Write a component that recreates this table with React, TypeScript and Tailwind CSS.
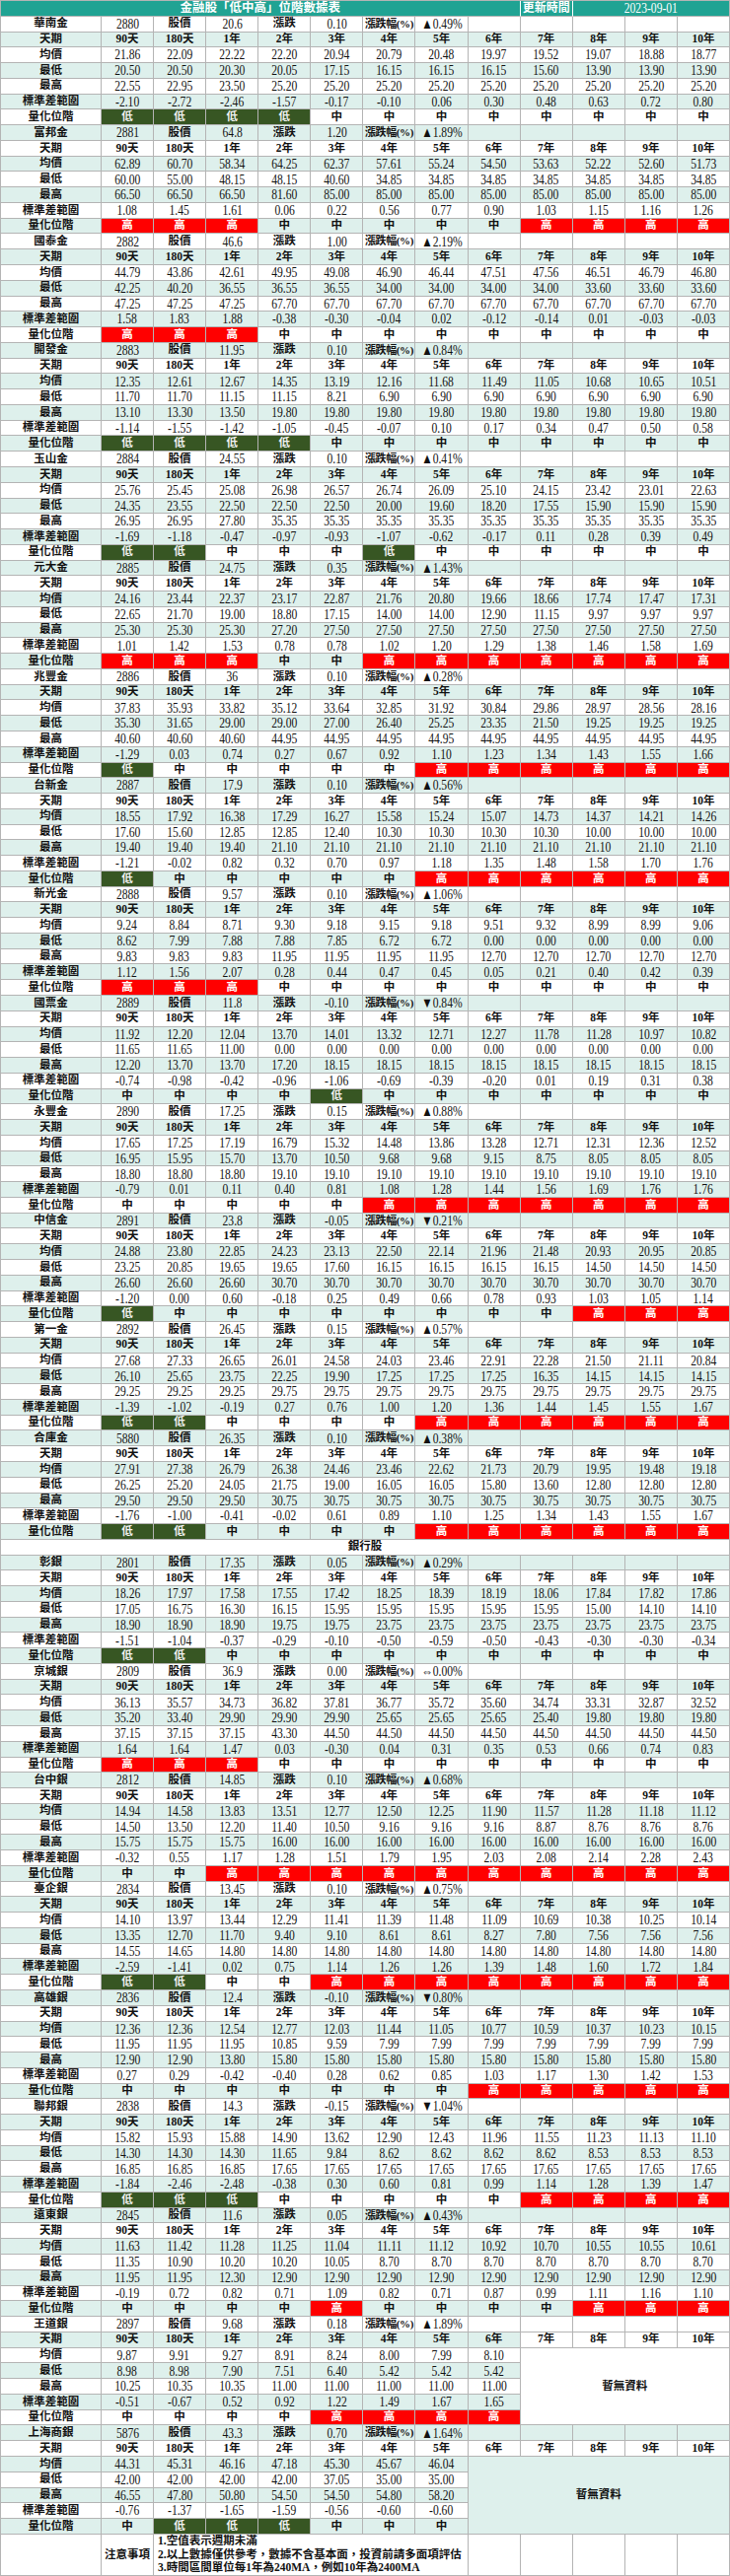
import React from 'react';
import clsx from 'clsx';

type Stock = {
  name: string;
  code: string;
  price: string;
  change: string;
  pct: string;
  avg: string;
  low: string;
  high: string;
  sd: string;
  level: string;
  tailWhite?: boolean;
  noDataBg?: string;
};

const PERIODS = ['90天', '180天', '1年', '2年', '3年', '4年', '5年', '6年', '7年', '8年', '9年', '10年'];

const MINT = 'bg-[#def0ec]';
const WHITE = 'bg-white';

const financials: Stock[] = [
  {
    name: '華南金', code: '2880', price: '20.6', change: '0.10', pct: '▲0.49%',
    avg: '21.86 22.09 22.22 22.20 20.94 20.79 20.48 19.97 19.52 19.07 18.88 18.77',
    low: '20.50 20.50 20.30 20.05 17.15 16.15 16.15 16.15 15.60 13.90 13.90 13.90',
    high: '22.55 22.95 23.50 25.20 25.20 25.20 25.20 25.20 25.20 25.20 25.20 25.20',
    sd: '-2.10 -2.72 -2.46 -1.57 -0.17 -0.10 0.06 0.30 0.48 0.63 0.72 0.80',
    level: '低低低低中中中中中中中中',
  },
  {
    name: '富邦金', code: '2881', price: '64.8', change: '1.20', pct: '▲1.89%',
    avg: '62.89 60.70 58.34 64.25 62.37 57.61 55.24 54.50 53.63 52.22 52.60 51.73',
    low: '60.00 55.00 48.15 48.15 40.60 34.85 34.85 34.85 34.85 34.85 34.85 34.85',
    high: '66.50 66.50 66.50 81.60 85.00 85.00 85.00 85.00 85.00 85.00 85.00 85.00',
    sd: '1.08 1.45 1.61 0.06 0.22 0.56 0.77 0.90 1.03 1.15 1.16 1.26',
    level: '高高高中中中中中高高高高',
  },
  {
    name: '國泰金', code: '2882', price: '46.6', change: '1.00', pct: '▲2.19%',
    avg: '44.79 43.86 42.61 49.95 49.08 46.90 46.44 47.51 47.56 46.51 46.79 46.80',
    low: '42.25 40.20 36.55 36.55 36.55 34.00 34.00 34.00 34.00 33.60 33.60 33.60',
    high: '47.25 47.25 47.25 67.70 67.70 67.70 67.70 67.70 67.70 67.70 67.70 67.70',
    sd: '1.58 1.83 1.88 -0.38 -0.30 -0.04 0.02 -0.12 -0.14 0.01 -0.03 -0.03',
    level: '高高高中中中中中中中中中',
  },
  {
    name: '開發金', code: '2883', price: '11.95', change: '0.10', pct: '▲0.84%',
    avg: '12.35 12.61 12.67 14.35 13.19 12.16 11.68 11.49 11.05 10.68 10.65 10.51',
    low: '11.70 11.70 11.15 11.15 8.21 6.90 6.90 6.90 6.90 6.90 6.90 6.90',
    high: '13.10 13.30 13.50 19.80 19.80 19.80 19.80 19.80 19.80 19.80 19.80 19.80',
    sd: '-1.14 -1.55 -1.42 -1.05 -0.45 -0.07 0.10 0.17 0.34 0.47 0.50 0.58',
    level: '低低低低中中中中中中中中',
  },
  {
    name: '玉山金', code: '2884', price: '24.55', change: '0.10', pct: '▲0.41%',
    avg: '25.76 25.45 25.08 26.98 26.57 26.74 26.09 25.10 24.15 23.42 23.01 22.63',
    low: '24.35 23.55 22.50 22.50 22.50 20.00 19.60 18.20 17.55 15.90 15.90 15.90',
    high: '26.95 26.95 27.80 35.35 35.35 35.35 35.35 35.35 35.35 35.35 35.35 35.35',
    sd: '-1.69 -1.18 -0.47 -0.97 -0.93 -1.07 -0.62 -0.17 0.11 0.28 0.39 0.49',
    level: '低低中中中低中中中中中中',
  },
  {
    name: '元大金', code: '2885', price: '24.75', change: '0.35', pct: '▲1.43%',
    avg: '24.16 23.44 22.37 23.17 22.87 21.76 20.80 19.66 18.66 17.74 17.47 17.31',
    low: '22.65 21.70 19.00 18.80 17.15 14.00 14.00 12.90 11.15 9.97 9.97 9.97',
    high: '25.30 25.30 25.30 27.20 27.50 27.50 27.50 27.50 27.50 27.50 27.50 27.50',
    sd: '1.01 1.42 1.53 0.78 0.78 1.02 1.20 1.29 1.38 1.46 1.58 1.69',
    level: '高高高中中高高高高高高高',
  },
  {
    name: '兆豐金', code: '2886', price: '36', change: '0.10', pct: '▲0.28%',
    avg: '37.83 35.93 33.82 35.12 33.64 32.85 31.92 30.84 29.86 28.97 28.56 28.16',
    low: '35.30 31.65 29.00 29.00 27.00 26.40 25.25 23.35 21.50 19.25 19.25 19.25',
    high: '40.60 40.60 40.60 44.95 44.95 44.95 44.95 44.95 44.95 44.95 44.95 44.95',
    sd: '-1.29 0.03 0.74 0.27 0.67 0.92 1.10 1.23 1.34 1.43 1.55 1.66',
    level: '低中中中中中高高高高高高',
  },
  {
    name: '台新金', code: '2887', price: '17.9', change: '0.10', pct: '▲0.56%',
    avg: '18.55 17.92 16.38 17.29 16.27 15.58 15.24 15.07 14.73 14.37 14.21 14.26',
    low: '17.60 15.60 12.85 12.85 12.40 10.30 10.30 10.30 10.30 10.00 10.00 10.00',
    high: '19.40 19.40 19.40 21.10 21.10 21.10 21.10 21.10 21.10 21.10 21.10 21.10',
    sd: '-1.21 -0.02 0.82 0.32 0.70 0.97 1.18 1.35 1.48 1.58 1.70 1.76',
    level: '低中中中中中高高高高高高',
  },
  {
    name: '新光金', code: '2888', price: '9.57', change: '0.10', pct: '▲1.06%',
    avg: '9.24 8.84 8.71 9.30 9.18 9.15 9.18 9.51 9.32 8.99 8.99 9.06',
    low: '8.62 7.99 7.88 7.88 7.85 6.72 6.72 0.00 0.00 0.00 0.00 0.00',
    high: '9.83 9.83 9.83 11.95 11.95 11.95 11.95 12.70 12.70 12.70 12.70 12.70',
    sd: '1.12 1.56 2.07 0.28 0.44 0.47 0.45 0.05 0.21 0.40 0.42 0.39',
    level: '高高高中中中中中中中中中',
  },
  {
    name: '國票金', code: '2889', price: '11.8', change: '-0.10', pct: '▼0.84%',
    avg: '11.92 12.20 12.04 13.70 14.01 13.32 12.71 12.27 11.78 11.28 10.97 10.82',
    low: '11.65 11.65 11.00 0.00 0.00 0.00 0.00 0.00 0.00 0.00 0.00 0.00',
    high: '12.20 13.70 13.70 17.20 18.15 18.15 18.15 18.15 18.15 18.15 18.15 18.15',
    sd: '-0.74 -0.98 -0.42 -0.96 -1.06 -0.69 -0.39 -0.20 0.01 0.19 0.31 0.38',
    level: '中中中中低中中中中中中中',
  },
  {
    name: '永豐金', code: '2890', price: '17.25', change: '0.15', pct: '▲0.88%',
    avg: '17.65 17.25 17.19 16.79 15.32 14.48 13.86 13.28 12.71 12.31 12.36 12.52',
    low: '16.95 15.95 15.70 13.70 10.50 9.68 9.68 9.15 8.75 8.05 8.05 8.05',
    high: '18.80 18.80 18.80 19.10 19.10 19.10 19.10 19.10 19.10 19.10 19.10 19.10',
    sd: '-0.79 0.01 0.11 0.40 0.81 1.08 1.28 1.44 1.56 1.69 1.76 1.76',
    level: '中中中中中高高高高高高高',
  },
  {
    name: '中信金', code: '2891', price: '23.8', change: '-0.05', pct: '▼0.21%',
    avg: '24.88 23.80 22.85 24.23 23.13 22.50 22.14 21.96 21.48 20.93 20.95 20.85',
    low: '23.25 20.85 19.65 19.65 17.60 16.15 16.15 16.15 16.15 14.50 14.50 14.50',
    high: '26.60 26.60 26.60 30.70 30.70 30.70 30.70 30.70 30.70 30.70 30.70 30.70',
    sd: '-1.20 0.00 0.60 -0.18 0.25 0.49 0.66 0.78 0.93 1.03 1.05 1.14',
    level: '低中中中中中中中中高高高',
  },
  {
    name: '第一金', code: '2892', price: '26.45', change: '0.15', pct: '▲0.57%',
    avg: '27.68 27.33 26.65 26.01 24.58 24.03 23.46 22.91 22.28 21.50 21.11 20.84',
    low: '26.10 25.65 23.75 22.25 19.90 17.25 17.25 17.25 16.35 14.15 14.15 14.15',
    high: '29.25 29.25 29.25 29.75 29.75 29.75 29.75 29.75 29.75 29.75 29.75 29.75',
    sd: '-1.39 -1.02 -0.19 0.27 0.76 1.00 1.20 1.36 1.44 1.45 1.55 1.67',
    level: '低低中中中中高高高高高高',
  },
  {
    name: '合庫金', code: '5880', price: '26.35', change: '0.10', pct: '▲0.38%',
    avg: '27.91 27.38 26.79 26.38 24.46 23.46 22.62 21.73 20.79 19.95 19.48 19.18',
    low: '26.25 25.20 24.05 21.75 19.00 16.05 16.05 15.80 13.60 12.80 12.80 12.80',
    high: '29.50 29.50 29.50 30.75 30.75 30.75 30.75 30.75 30.75 30.75 30.75 30.75',
    sd: '-1.76 -1.00 -0.41 -0.02 0.61 0.89 1.10 1.25 1.34 1.43 1.55 1.67',
    level: '低低中中中中高高高高高高',
  },
];

const banks: Stock[] = [
  {
    name: '彰銀', code: '2801', price: '17.35', change: '0.05', pct: '▲0.29%',
    avg: '18.26 17.97 17.58 17.55 17.42 18.25 18.39 18.19 18.06 17.84 17.82 17.86',
    low: '17.05 16.75 16.30 16.15 15.95 15.95 15.95 15.95 15.95 15.00 14.10 14.10',
    high: '18.90 18.90 18.90 19.75 19.75 23.75 23.75 23.75 23.75 23.75 23.75 23.75',
    sd: '-1.51 -1.04 -0.37 -0.29 -0.10 -0.50 -0.59 -0.50 -0.43 -0.30 -0.30 -0.34',
    level: '低低中中中中中中中中中中',
  },
  {
    name: '京城銀', code: '2809', price: '36.9', change: '0.00', pct: '⇔0.00%',
    avg: '36.13 35.57 34.73 36.82 37.81 36.77 35.72 35.60 34.74 33.31 32.87 32.52',
    low: '35.20 33.40 29.90 29.90 29.90 25.65 25.65 25.65 25.40 19.80 19.80 19.80',
    high: '37.15 37.15 37.15 43.30 44.50 44.50 44.50 44.50 44.50 44.50 44.50 44.50',
    sd: '1.64 1.64 1.47 0.03 -0.30 0.04 0.31 0.35 0.53 0.66 0.74 0.83',
    level: '高高高中中中中中中中中中',
  },
  {
    name: '台中銀', code: '2812', price: '14.85', change: '0.10', pct: '▲0.68%',
    avg: '14.94 14.58 13.83 13.51 12.77 12.50 12.25 11.90 11.57 11.28 11.18 11.12',
    low: '14.50 13.50 12.20 11.40 10.50 9.16 9.16 9.16 8.87 8.76 8.76 8.76',
    high: '15.75 15.75 15.75 16.00 16.00 16.00 16.00 16.00 16.00 16.00 16.00 16.00',
    sd: '-0.32 0.55 1.17 1.28 1.51 1.79 1.95 2.03 2.08 2.14 2.28 2.43',
    level: '中中高高高高高高高高高高',
  },
  {
    name: '臺企銀', code: '2834', price: '13.45', change: '0.10', pct: '▲0.75%',
    avg: '14.10 13.97 13.44 12.29 11.41 11.39 11.48 11.09 10.69 10.38 10.25 10.14',
    low: '13.35 12.70 11.70 9.40 9.10 8.61 8.61 8.27 7.80 7.56 7.56 7.56',
    high: '14.55 14.65 14.80 14.80 14.80 14.80 14.80 14.80 14.80 14.80 14.80 14.80',
    sd: '-2.59 -1.41 0.02 0.75 1.14 1.26 1.26 1.39 1.48 1.60 1.72 1.84',
    level: '低低中中高高高高高高高高',
  },
  {
    name: '高雄銀', code: '2836', price: '12.4', change: '-0.10', pct: '▼0.80%',
    avg: '12.36 12.36 12.54 12.77 12.03 11.44 11.05 10.77 10.59 10.37 10.23 10.15',
    low: '11.95 11.95 11.95 10.85 9.59 7.99 7.99 7.99 7.99 7.99 7.99 7.99',
    high: '12.90 12.90 13.80 15.80 15.80 15.80 15.80 15.80 15.80 15.80 15.80 15.80',
    sd: '0.27 0.29 -0.42 -0.40 0.28 0.62 0.85 1.03 1.17 1.30 1.42 1.53',
    level: '中中中中中中中高高高高高',
  },
  {
    name: '聯邦銀', code: '2838', price: '14.3', change: '-0.15', pct: '▼1.04%',
    avg: '15.82 15.93 15.88 14.90 13.62 12.90 12.43 11.96 11.55 11.23 11.13 11.10',
    low: '14.30 14.30 14.30 11.65 9.84 8.62 8.62 8.62 8.62 8.53 8.53 8.53',
    high: '16.85 16.85 16.85 17.65 17.65 17.65 17.65 17.65 17.65 17.65 17.65 17.65',
    sd: '-1.84 -2.46 -2.48 -0.38 0.30 0.60 0.81 0.99 1.14 1.28 1.39 1.47',
    level: '低低低中中中中中高高高高',
  },
  {
    name: '遠東銀', code: '2845', price: '11.6', change: '0.05', pct: '▲0.43%',
    avg: '11.63 11.42 11.28 11.25 11.04 11.11 11.12 10.92 10.70 10.55 10.55 10.61',
    low: '11.35 10.90 10.20 10.20 10.05 8.70 8.70 8.70 8.70 8.70 8.70 8.70',
    high: '11.95 11.95 12.30 12.90 12.90 12.90 12.90 12.90 12.90 12.90 12.90 12.90',
    sd: '-0.19 0.72 0.82 0.71 1.09 0.82 0.71 0.87 0.99 1.11 1.16 1.10',
    level: '中中中中高中中中中高高高',
  },
  {
    name: '王道銀', code: '2897', price: '9.68', change: '0.18', pct: '▲1.89%',
    avg: '9.87 9.91 9.27 8.91 8.24 8.00 7.99 8.10',
    low: '8.98 8.98 7.90 7.51 6.40 5.42 5.42 5.42',
    high: '10.25 10.35 10.35 11.00 11.00 11.00 11.00 11.00',
    sd: '-0.51 -0.67 0.52 0.92 1.22 1.49 1.67 1.65',
    level: '中中中中高高高高',
    tailWhite: true,
    noDataBg: WHITE,
  },
  {
    name: '上海商銀', code: '5876', price: '43.3', change: '0.70', pct: '▲1.64%',
    avg: '44.31 45.31 46.16 47.18 45.30 45.67 46.04',
    low: '42.00 42.00 42.00 42.00 37.05 35.00 35.00',
    high: '46.55 47.80 50.80 54.50 54.50 54.80 58.20',
    sd: '-0.76 -1.37 -1.65 -1.59 -0.56 -0.60 -0.60',
    level: '中低低低中中中',
    noDataBg: MINT,
  },
];

const cellBase =
  'flex items-center justify-center overflow-visible whitespace-nowrap border-r border-b border-[#b4b4b4] leading-none';

const NUMERIC = /^[-▲▼⇔\d.%]+$/;

// numbers use a tall, narrowed serif like the sheet; CJK labels are smaller and heavier
function Text({ value }: { value: string }) {
  if (NUMERIC.test(value)) {
    return <span className="inline-block origin-center scale-x-[0.8] text-[14.5px] font-normal">{value}</span>;
  }
  return <span className="text-[11.5px] font-semibold">{value}</span>;
}

function Cell({ bg, className, children }: { bg: string; className?: string; children?: string }) {
  return (
    <div className={clsx(cellBase, bg, className)}>
      {children !== undefined && <Text value={children} />}
    </div>
  );
}

function LevelCell({ value, bg }: { value: string; bg: string }) {
  if (value === '高') {
    return <Cell bg="bg-[#ff0000]" className="border-[#8a1010] text-white">高</Cell>;
  }
  if (value === '低') {
    return <Cell bg="bg-[#375623]" className="border-[#1d2e12] text-[#f2f2f2]">低</Cell>;
  }
  return <Cell bg={bg}>{value}</Cell>;
}

function renderBlock(stock: Stock, start: number) {
  const rowBg = (i: number) => ((start + i) % 2 === 0 ? MINT : WHITE);
  const cells: React.ReactNode[] = [];
  const key = stock.code;

  const hb = rowBg(0);
  const head = [stock.name, stock.code, '股價', stock.price, '漲跌', stock.change];
  head.forEach((v, i) => cells.push(<Cell key={`${key}-h${i}`} bg={hb}>{v}</Cell>));
  cells.push(
    <div key={`${key}-hp`} className={clsx(cellBase, hb)}>
      <span className="text-[11px] font-semibold tracking-[-0.4px]">漲跌幅(%)</span>
    </div>
  );
  cells.push(<Cell key={`${key}-hpct`} bg={hb}>{stock.pct}</Cell>);
  for (let i = 0; i < 5; i++) cells.push(<Cell key={`${key}-he${i}`} bg={hb} />);

  const pb = rowBg(1);
  cells.push(<Cell key={`${key}-pl`} bg={pb}>天期</Cell>);
  PERIODS.forEach((p, i) =>
    cells.push(
      <Cell key={`${key}-p${i}`} bg={stock.tailWhite && i >= 8 ? WHITE : pb}>
        {p}
      </Cell>
    )
  );

  const rows: [string, string][] = [
    ['均價', stock.avg],
    ['最低', stock.low],
    ['最高', stock.high],
    ['標準差範圍', stock.sd],
  ];
  const count = stock.avg.split(' ').length;

  rows.forEach(([label, data], r) => {
    const bg = rowBg(2 + r);
    cells.push(<Cell key={`${key}-l${r}`} bg={bg}>{label}</Cell>);
    data.split(' ').forEach((v, i) => cells.push(<Cell key={`${key}-d${r}-${i}`} bg={bg}>{v}</Cell>));
    if (r === 0 && count < 12) {
      cells.push(
        <div
          key={`${key}-nodata`}
          className={clsx(cellBase, stock.noDataBg, 'row-span-5', count === 8 ? 'col-span-4' : 'col-span-5')}
        >
          <Text value="暫無資料" />
        </div>
      );
    }
  });

  const lb = rowBg(6);
  cells.push(<Cell key={`${key}-ql`} bg={lb}>量化位階</Cell>);
  Array.from(stock.level).forEach((v, i) => cells.push(<LevelCell key={`${key}-q${i}`} value={v} bg={lb} />));

  return cells;
}

export default function App() {
  const cells: React.ReactNode[] = [];
  let row = 1;
  financials.forEach((s) => {
    cells.push(...renderBlock(s, row));
    row += 7;
  });
  cells.push(
    <Cell key="bank-title" bg={row % 2 === 0 ? MINT : WHITE} className="col-span-13">
      銀行股
    </Cell>
  );
  row += 1;
  banks.forEach((s) => {
    cells.push(...renderBlock(s, row));
    row += 7;
  });

  return (
    <div className="w-[740px] bg-white font-['Liberation_Serif','Noto_Sans_CJK_TC',serif] text-[#111]">
      <div className="grid auto-rows-[15.77px] grid-cols-[102px_repeat(12,minmax(0,1fr))] border-l border-t border-[#b4b4b4]">
        <div className={clsx(cellBase, 'col-span-9 border-r-white bg-[#20a393] text-white')}>
          <span className="text-[12.5px] font-bold">金融股「低中高」位階數據表</span>
        </div>
        <div className={clsx(cellBase, 'border-r-white bg-[#20a393] text-white')}>
          <span className="text-[12px] font-bold">更新時間</span>
        </div>
        <div className={clsx(cellBase, 'col-span-3 bg-[#20a393] text-white')}>
          <span className="inline-block scale-x-[0.8] text-[14.5px]">2023-09-01</span>
        </div>
        {cells}
      </div>
      <div className="grid h-[42px] grid-cols-[102px_repeat(12,minmax(0,1fr))] border-l border-[#b4b4b4]">
        <Cell bg={WHITE} />
        <Cell bg={WHITE}>注意事項</Cell>
        <div className="col-span-6 flex flex-col justify-center border-r border-b border-[#b4b4b4] pl-1 text-[11.5px] leading-[13.5px] font-semibold">
          <span>1.空值表示週期未滿</span>
          <span>2.以上數據僅供參考，數據不含基本面，投資前請多面項評估</span>
          <span>3.時間區間單位每1年為240MA，例如10年為2400MA</span>
        </div>
        <Cell bg={WHITE} />
        <Cell bg={WHITE} />
        <Cell bg={WHITE} />
        <Cell bg={WHITE} />
        <Cell bg={WHITE} />
      </div>
    </div>
  );
}
